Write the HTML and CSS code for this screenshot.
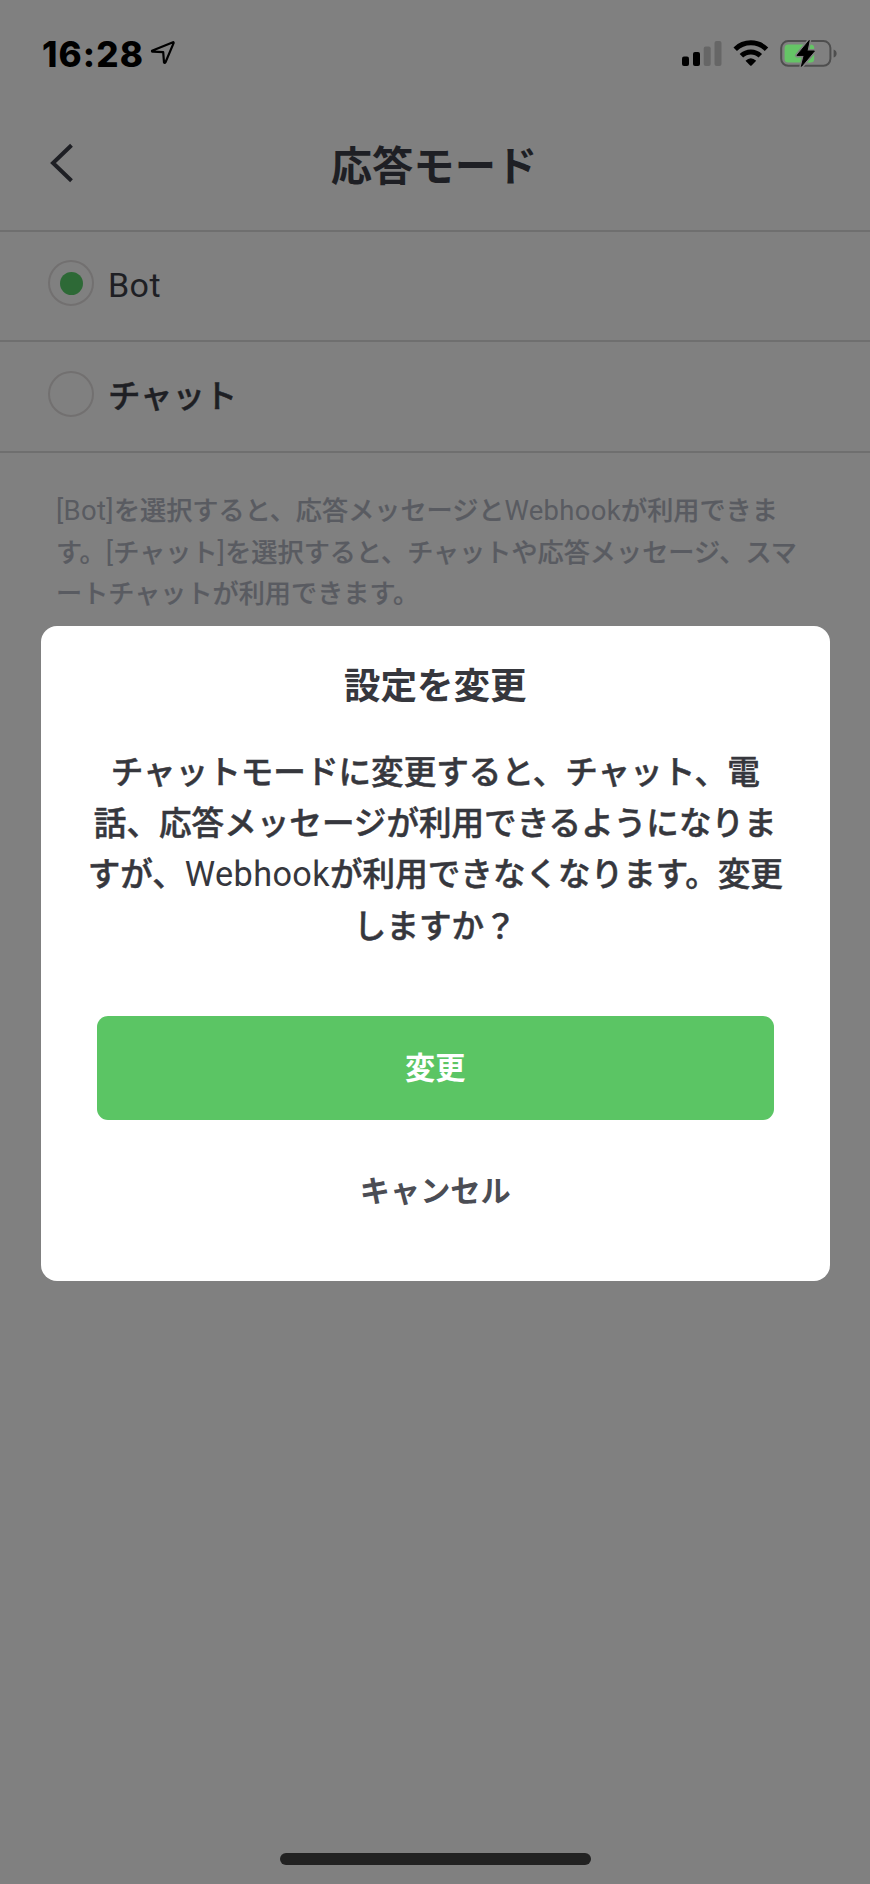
FILE: index.html
```html
<!DOCTYPE html>
<html lang="ja">
<head>
<meta charset="utf-8">
<title>応答モード</title>
<link rel="stylesheet" href="styles.css">
</head>
<body>
<div class="screen">
  <div class="status">
    <span class="time">16:28</span>
    <svg class="loc" width="26" height="26" viewBox="0 0 26 26"><path d="M23 2.3 2 10.8 Q1.8 11.6 2.8 11.6 L13.2 12.2 14 22.3 Q14.6 23.6 15.5 22.2 L23.6 3.1 Q23.8 2 23 2.3Z" fill="none" stroke="#000" stroke-width="2.2" stroke-linejoin="round"/></svg>
    <svg class="icons" width="160" height="30" viewBox="680 38 160 30">
      <rect x="682" y="56.5" width="7" height="9.5" rx="2"/>
      <rect x="693" y="52" width="7" height="14" rx="2"/>
      <rect x="703.7" y="46.5" width="7" height="19.5" rx="2" fill="#666"/>
      <rect x="714.5" y="41" width="7" height="25" rx="2" fill="#666"/>
      <g fill="none" stroke="#000" stroke-width="5">
        <path d="M735.2 49.2a22.5 22.5 0 0 1 31.3 0"/>
        <path d="M741.4 55.8a13.5 13.5 0 0 1 18.9 0"/>
      </g>
      <path d="M745.5 60.8q5.3-5 10.7 0l-4.6 4.6q-.8.6-1.5 0z"/>
      <rect x="781.2" y="41.1" width="49.2" height="24.7" rx="7" fill="none" stroke="#4e4e4e" stroke-width="2"/>
      <path d="M833.6 49.5q3 1 3 4t-3 4z" fill="#4e4e4e"/>
      <rect x="784.6" y="44.6" width="29.6" height="17.8" rx="3.5" fill="#65c466"/>
      <path d="M809.2 40.5 797 55.4h7.2L801.4 66.4 814.4 51h-7.4z" stroke="#808080" stroke-width="4" stroke-linejoin="round"/>
      <path d="M809.2 40.5 797 55.4h7.2L801.4 66.4 814.4 51h-7.4z" stroke="#000" stroke-width="1" stroke-linejoin="round"/>
    </svg>
  </div>
  <header class="header">
    <svg class="back" width="26" height="40" viewBox="0 0 26 40"><path d="M22.5 2.2 4 20 22.5 37.8" fill="none" stroke="#1e1f24" stroke-width="4"/></svg>
    <h1 class="title">応答モード</h1>
  </header>
  <div class="row"><span class="radio on"></span><span class="label"><span class="latin">Bot</span></span></div>
  <div class="row"><span class="radio"></span><span class="label">チャット</span></div>
  <p class="desc"><span class="latin">[Bot]</span>を選択すると、応答メッセージと<span class="latin">Webhook</span>が利用できま<br>す。<span class="latin">[</span>チャット<span class="latin">]</span>を選択すると、チャットや応答メッセージ、スマ<br>ートチャットが利用できます。</p>
  <div class="home"></div>
  <div class="modal">
    <h2 class="modal-title">設定を変更</h2>
    <p class="message">チャットモードに変更すると、チャット、電<br>話、応答メッセージが利用できるようになりま<br>すが、<span class="latin">Webhook</span>が利用できなくなります。変更<br>しますか？</p>
    <button class="confirm">変更</button>
    <button class="cancel">キャンセル</button>
  </div>
</div>
</body>
</html>
```
FILE: styles.css
```css
* { box-sizing: border-box; margin: 0; padding: 0; }
body { font-family: Roboto, "Noto Sans CJK JP", sans-serif; background: #808080; }
.screen {
  position: relative;
  width: 870px;
  height: 1884px;
  display: flex;
  flex-direction: column;
  background: #808080;
  overflow: hidden;
  white-space: nowrap;
}
.latin { font-size: 1.05em; font-weight: 400; line-height: 1; letter-spacing: .012em; -webkit-text-stroke: 0; }
.status { display: flex; align-items: center; height: 106px; padding: 0 30px 0 42px; flex: none; }
.time { font: 800 35px/40px Inter, sans-serif; letter-spacing: 1.1px; width: 102px; margin-top: 1px; color: #000; }
.loc { margin-left: 6px; }
.icons { margin-left: auto; }
.header {
  display: grid;
  grid-template-columns: 120px 1fr 120px;
  align-items: center;
  height: 126px;
  flex: none;
  border-bottom: 2px solid #6f6f6f;
}
.back { margin-left: 49px; margin-bottom: 10px; }
.title { font-size: 41.3px; line-height: 60px; font-weight: 700; color: #1e1f24; text-align: center; margin: 0 2px 3px 0; }
.row {
  display: flex;
  align-items: center;
  height: 110.4px;
  flex: none;
  padding: 0 0 6px 48px;
  border-bottom: 2px solid #6f6f6f;
}
.radio { width: 46px; height: 46px; border: 2px solid #727070; border-radius: 50%; display: grid; place-items: center; }
.radio.on::after { content: ""; width: 23px; height: 23px; border-radius: 50%; background: #2d6936; }
.label { font-size: 32.4px; line-height: 48px; font-weight: 500; color: #1e1f24; margin: 6px 0 0 14px; -webkit-text-stroke: .5px; }
.desc { margin: 38px 0 0 56px; font-size: 26.15px; line-height: 41.8px; font-weight: 500; color: #595b61; -webkit-text-stroke: .2px; }
.home { margin: auto auto 19px; width: 311px; height: 12px; border-radius: 6px; background: #222; }
.modal {
  position: absolute;
  left: 41px;
  top: 626px;
  width: 788.5px;
  height: 654.5px;
  padding: 36px 30px;
  border-radius: 16px;
  background: #fff;
  display: flex;
  flex-direction: column;
  align-items: center;
}
.modal-title { font-size: 36.5px; line-height: 50px; font-weight: 700; color: #36373d; }
.message { margin-top: 36px; font-size: 32.6px; line-height: 51.2px; font-weight: 500; color: #36373d; text-align: center; -webkit-text-stroke: .5px; }
.confirm, .cancel { border: 0; font: 700 30.2px/44px Roboto, "Noto Sans CJK JP", sans-serif; }
.confirm { margin-top: 63px; width: 677px; height: 104.5px; flex: none; padding-top: 2px; border-radius: 11px; background: #5bc564; color: #fff; }
.cancel { margin-top: 50px; background: none; color: #4b4d54; }
```
